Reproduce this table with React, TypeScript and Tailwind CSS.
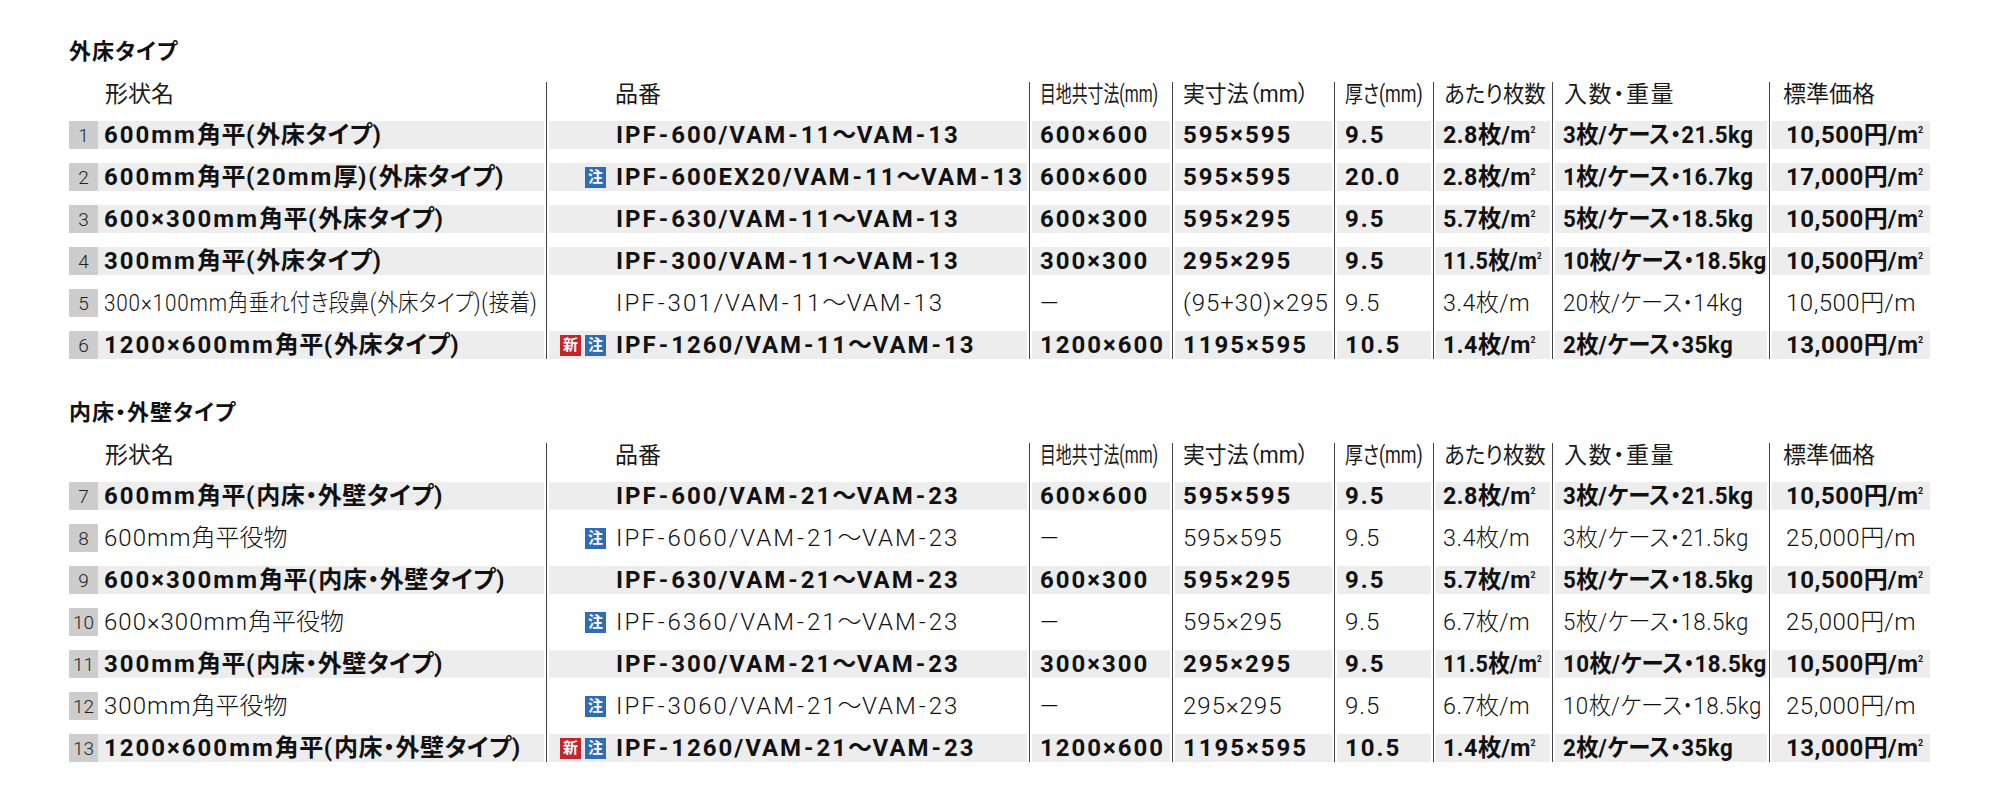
import React from "react"

type Badge = "new" | "note"
type Row = {
  no: number
  bold: boolean
  badges: Badge[]
  cells: string[]
  narrow?: boolean
}

const r = (no: number, bold: boolean, badges: Badge[], ...cells: string[]): Row => ({ no, bold, badges, cells })

const outdoor: Row[] = [
  r(1, true, [], "600mm角平(外床タイプ)", "IPF-600/VAM-11〜VAM-13", "600×600", "595×595", "9.5", "2.8枚/㎡", "3枚/ケース・21.5kg", "10,500円/㎡"),
  r(2, true, ["note"], "600mm角平(20mm厚)(外床タイプ)", "IPF-600EX20/VAM-11〜VAM-13", "600×600", "595×595", "20.0", "2.8枚/㎡", "1枚/ケース・16.7kg", "17,000円/㎡"),
  r(3, true, [], "600×300mm角平(外床タイプ)", "IPF-630/VAM-11〜VAM-13", "600×300", "595×295", "9.5", "5.7枚/㎡", "5枚/ケース・18.5kg", "10,500円/㎡"),
  r(4, true, [], "300mm角平(外床タイプ)", "IPF-300/VAM-11〜VAM-13", "300×300", "295×295", "9.5", "11.5枚/㎡", "10枚/ケース・18.5kg", "10,500円/㎡"),
  { ...r(5, false, [], "300×100mm角垂れ付き段鼻(外床タイプ)(接着)", "IPF-301/VAM-11〜VAM-13", "—", "(95+30)×295", "9.5", "3.4枚/m", "20枚/ケース・14kg", "10,500円/m"), narrow: true },
  r(6, true, ["new", "note"], "1200×600mm角平(外床タイプ)", "IPF-1260/VAM-11〜VAM-13", "1200×600", "1195×595", "10.5", "1.4枚/㎡", "2枚/ケース・35kg", "13,000円/㎡"),
]

const indoor: Row[] = [
  r(7, true, [], "600mm角平(内床・外壁タイプ)", "IPF-600/VAM-21〜VAM-23", "600×600", "595×595", "9.5", "2.8枚/㎡", "3枚/ケース・21.5kg", "10,500円/㎡"),
  r(8, false, ["note"], "600mm角平役物", "IPF-6060/VAM-21〜VAM-23", "—", "595×595", "9.5", "3.4枚/m", "3枚/ケース・21.5kg", "25,000円/m"),
  r(9, true, [], "600×300mm角平(内床・外壁タイプ)", "IPF-630/VAM-21〜VAM-23", "600×300", "595×295", "9.5", "5.7枚/㎡", "5枚/ケース・18.5kg", "10,500円/㎡"),
  r(10, false, ["note"], "600×300mm角平役物", "IPF-6360/VAM-21〜VAM-23", "—", "595×295", "9.5", "6.7枚/m", "5枚/ケース・18.5kg", "25,000円/m"),
  r(11, true, [], "300mm角平(内床・外壁タイプ)", "IPF-300/VAM-21〜VAM-23", "300×300", "295×295", "9.5", "11.5枚/㎡", "10枚/ケース・18.5kg", "10,500円/㎡"),
  r(12, false, ["note"], "300mm角平役物", "IPF-3060/VAM-21〜VAM-23", "—", "295×295", "9.5", "6.7枚/m", "10枚/ケース・18.5kg", "25,000円/m"),
  r(13, true, ["new", "note"], "1200×600mm角平(内床・外壁タイプ)", "IPF-1260/VAM-21〜VAM-23", "1200×600", "1195×595", "10.5", "1.4枚/㎡", "2枚/ケース・35kg", "13,000円/㎡"),
]

type Mode = "wide" | "mid" | "tight"

// columns after 品番: width, text padding inside the band, header padding, letter spacing
const cols: { w: string; pl: string; hpl: string; mode: Mode }[] = [
  { w: "w-[143px]", pl: "pl-[8px]", hpl: "pl-[10px]", mode: "wide" },
  { w: "w-[162px]", pl: "pl-[8px]", hpl: "pl-[10px]", mode: "wide" },
  { w: "w-[99px]", pl: "pl-[8px]", hpl: "pl-[10px]", mode: "wide" },
  { w: "w-[119px]", pl: "pl-[7px]", hpl: "pl-[10px]", mode: "tight" },
  { w: "w-[217px]", pl: "pl-[8px]", hpl: "pl-[11px]", mode: "tight" },
  { w: "w-[161px]", pl: "pl-[14px]", hpl: "pl-[13px]", mode: "tight" },
]

const LATIN = /^[0-9A-Za-z.,/+()×—]+$/

const latinTrack: Record<Mode, string> = {
  wide: "tracking-[2px]",
  mid: "tracking-[1px]",
  tight: "tracking-[0.5px]",
}
const cjkTrack: Record<Mode, string> = {
  wide: "tracking-[0.5px]",
  mid: "tracking-[0px]",
  tight: "tracking-[0px]",
}

// the catalogue squeezes a few cells so that they fit their column
function squeeze(i: number, c: string) {
  if (i === 3) return c.startsWith("11.5") ? "scale-x-[0.9]" : "scale-x-[0.97]"
  if (i === 4) return "scale-x-[0.93]"
  return ""
}

function Txt({ s, mode = "wide" }: { s: string; mode?: Mode }) {
  const parts = s.split(/(㎡|-|[0-9A-Za-z.,/+()×—]+)/).filter(Boolean)
  return (
    <>
      {parts.map((p, i) => {
        if (p === "㎡")
          return (
            <span key={i} className="tracking-normal">
              m<span className="align-[10px] text-[9px]">2</span>
            </span>
          )
        if (p === "-")
          return (
            <span key={i} className={`mx-[1px] ${latinTrack[mode]}`}>
              -
            </span>
          )
        if (LATIN.test(p))
          return (
            <span key={i} className={latinTrack[mode]}>
              {p}
            </span>
          )
        return (
          <span key={i} className={cjkTrack[mode]}>
            {p}
          </span>
        )
      })}
    </>
  )
}

function Mark({ kind }: { kind: Badge }) {
  return kind === "new" ? (
    <span className="flex h-[21px] w-[21px] items-center justify-center bg-[#c8232c] text-[15px] font-bold leading-none tracking-normal text-white">
      新
    </span>
  ) : (
    <span className="flex h-[21px] w-[21px] items-center justify-center bg-[#2f6cb7] text-[15px] font-bold leading-none tracking-normal text-white">
      注
    </span>
  )
}

function Header() {
  return (
    <div className="flex h-[32px] text-[23px] font-normal leading-[26px] text-[#1a1a1a]">
      <div className="w-[29px]" />
      <div className="w-[448px] pl-[7px]">形状名</div>
      <div className="w-[483px] border-l border-[#444] pl-[68px]">品番</div>
      <div className={`${cols[0].w} ${cols[0].hpl} border-l border-[#444]`}>
        <span className="inline-block origin-left scale-x-[0.69] whitespace-nowrap">目地共寸法(mm)</span>
      </div>
      <div className={`${cols[1].w} ${cols[1].hpl} border-l border-[#444]`}>
        <span className="inline-block origin-left scale-x-[0.95] whitespace-nowrap">実寸法（mm）</span>
      </div>
      <div className={`${cols[2].w} ${cols[2].hpl} border-l border-[#444]`}>
        <span className="inline-block origin-left scale-x-[0.78] whitespace-nowrap">厚さ(mm)</span>
      </div>
      <div className={`${cols[3].w} ${cols[3].hpl} border-l border-[#444]`}>
        <span className="inline-block origin-left scale-x-[0.93] whitespace-nowrap">あたり枚数</span>
      </div>
      <div className={`${cols[4].w} ${cols[4].hpl} border-l border-[#444] tracking-[1.5px] whitespace-nowrap`}>入数・重量</div>
      <div className={`${cols[5].w} ${cols[5].hpl} border-l border-[#444] whitespace-nowrap`}>標準価格</div>
    </div>
  )
}

function DataRow({ row, last }: { row: Row; last: boolean }) {
  const pad = last ? "pt-[7px]" : "py-[7px]"
  const band = row.bold ? "bg-[#ededed]" : ""
  const weight = row.bold ? "font-bold" : "font-light"
  const [name, part, ...rest] = row.cells
  return (
    <div className={`flex text-[24px] leading-none text-[#111] whitespace-nowrap ${weight}`}>
      <div className={`flex w-[29px] ${pad}`}>
        <div className="flex h-[28px] w-full items-center justify-center bg-[#cdcdcd] text-[19px] font-light text-[#222]">
          {row.no}
        </div>
      </div>
      <div className={`w-[448px] ${pad}`}>
        <div className={`mr-[2px] flex h-[28px] items-center pl-[6px] ${band}`}>
          {row.narrow ? (
            <span className="inline-block origin-left scale-x-[0.86]">
              <Txt s={name} mode="mid" />
            </span>
          ) : (
            <Txt s={name} mode={row.bold ? "wide" : "mid"} />
          )}
        </div>
      </div>
      <div className={`w-[483px] border-l border-[#444] ${pad}`}>
        <div className={`ml-[2px] mr-[2px] flex h-[28px] items-center ${band}`}>
          <div className="flex w-[57px] justify-end gap-[4px]">
            {row.badges.map((b) => (
              <Mark key={b} kind={b} />
            ))}
          </div>
          <div className="ml-[10px]">
            <Txt s={part} />
          </div>
        </div>
      </div>
      {rest.map((c, i) => {
        const mode: Mode = row.bold || cols[i].mode === "tight" ? cols[i].mode : "mid"
        return (
          <div key={i} className={`${cols[i].w} border-l border-[#444] ${pad}`}>
            <div className={`ml-[2px] flex h-[28px] items-center ${i < 5 ? "mr-[2px]" : ""} ${cols[i].pl} ${band}`}>
              <span className={`inline-block origin-left ${squeeze(i, c)}`}>
                <Txt s={c} mode={mode} />
              </span>
            </div>
          </div>
        )
      })}
    </div>
  )
}

function Section({ title, rows }: { title: string; rows: Row[] }) {
  return (
    <section>
      <h2 className="mb-[15px] text-[22px] font-bold leading-[30px] tracking-[1px] text-[#111]">{title}</h2>
      <Header />
      {rows.map((row, i) => (
        <DataRow key={row.no} row={row} last={i === rows.length - 1} />
      ))}
    </section>
  )
}

export default function App() {
  return (
    <div className="min-h-[798px] w-full bg-white pl-[69px] pt-[37px] font-['Roboto','Noto_Sans_CJK_JP',sans-serif] [font-feature-settings:'palt']">
      <Section title="外床タイプ" rows={outdoor} />
      <div className="h-[39px]" />
      <Section title="内床・外壁タイプ" rows={indoor} />
    </div>
  )
}
